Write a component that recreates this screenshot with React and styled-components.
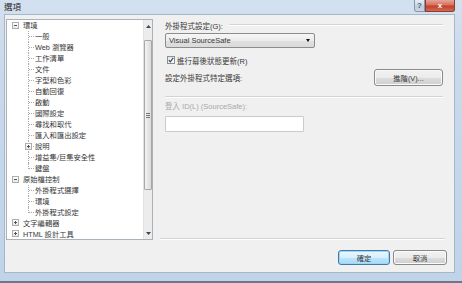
import React from 'react';
import styled, { createGlobalStyle } from 'styled-components';

const FONT = '"Liberation Sans", "Noto Sans CJK TC", sans-serif';

const Global = createGlobalStyle`
  html, body { margin: 0; padding: 0; background: #c3d5ea; }
  body { font-family: ${FONT}; }
  * { box-sizing: border-box; }
`;

const Window = styled.div`
  width: 462px;
  height: 283px;
  display: flex;
  flex-direction: column;
  background: linear-gradient(180deg, #d3e0ef 0%, #c8d9ec 30%, #c0d3e8 100%);
  border-bottom: 2px solid #6d7886;
  overflow: hidden;
`;

const TitleBar = styled.div`
  height: 14px;
  flex: none;
  display: flex;
  align-items: flex-start;
`;

const Title = styled.div`
  font-size: 8.5px;
  line-height: 14px;
  padding-left: 4px;
  color: #2a2a2a;
`;

const CaptionGroup = styled.div`
  margin-left: auto;
  margin-right: 7px;
  display: flex;
  height: 12px;
`;

const CaptionButton = styled.div`
  width: ${p => (p.$close ? 30 : 11)}px;
  height: 12px;
  display: flex;
  align-items: center;
  justify-content: center;
  font-size: 8px;
  font-weight: bold;
  color: ${p => (p.$close ? '#fff' : '#4d5f74')};
  border: 1px solid ${p => (p.$close ? '#8c3b30' : '#8797ab')};
  border-top: none;
  border-radius: ${p => (p.$close ? '0 0 3px 0' : '0 0 0 3px')};
  background: ${p =>
    p.$close
      ? 'linear-gradient(180deg, #e8a597 0%, #d4715f 45%, #c2402b 55%, #d26a52 100%)'
      : 'linear-gradient(180deg, #e6edf6 0%, #cfdbe9 45%, #bccbdd 55%, #cbd7e6 100%)'};
`;

const Client = styled.div`
  flex: 1;
  margin: 0 7px 8px 4px;
  background: #f0f0f0;
  border: 1px solid #a7b7ca;
  display: flex;
  flex-direction: column;
  padding: 4px 7px 0 1px;
`;

const MainRow = styled.div`
  display: flex;
  height: 221px;
`;

const Tree = styled.div`
  width: 147px;
  flex: none;
  border: 1px solid #a9b1bb;
  background: #fff;
  display: flex;
`;

const TreeList = styled.div`
  flex: 1;
  display: flex;
  flex-direction: column;
`;

const Row = styled.div`
  height: 11px;
  display: flex;
  align-items: center;
  padding-left: ${p => (p.$level === 0 ? 5 : 21)}px;
  font-size: 7.3px;
  color: #383838;
  white-space: nowrap;
`;

const Branch = styled.span`
  position: relative;
  width: 6px;
  height: 11px;
  flex: none;
  margin-right: 1px;
  &::before {
    content: '';
    position: absolute;
    left: 0;
    top: 0;
    height: ${p => (p.$last ? '6px' : '11px')};
    border-left: 1px dotted #aaaaaa;
  }
  &::after {
    content: '';
    position: absolute;
    left: 1px;
    top: 5px;
    width: 5px;
    border-top: 1px dotted #aaaaaa;
  }
`;

const Expander = styled.span`
  width: 7px;
  height: 7px;
  flex: none;
  border: 1px solid #aeaeae;
  background: linear-gradient(180deg, #ffffff, #e8e8e8);
  display: flex;
  align-items: center;
  justify-content: center;
  position: ${p => (p.$overlay ? 'absolute' : 'relative')};
  left: ${p => (p.$overlay ? '-3px' : 'auto')};
  top: ${p => (p.$overlay ? '2px' : 'auto')};
  z-index: 1;
  margin-right: ${p => (p.$overlay ? 0 : 4)}px;
  &::before {
    content: '';
    width: 3px;
    border-top: 1px solid #555;
  }
  &::after {
    content: '';
    position: absolute;
    left: 2px;
    top: 1px;
    height: 3px;
    border-left: 1px solid #555;
    display: ${p => (p.$plus ? 'block' : 'none')};
  }
`;

const Scrollbar = styled.div`
  width: 9px;
  flex: none;
  background: #ececec;
  border-left: 1px solid #e2e2e2;
  display: flex;
  flex-direction: column;
  align-items: center;
`;

const ScrollArrow = styled.div`
  height: 12px;
  width: 100%;
  display: flex;
  align-items: center;
  justify-content: center;
`;

const Thumb = styled.div`
  width: 8px;
  height: 150px;
  margin-top: 8px;
  border: 1px solid #a8a8a8;
  border-radius: 1px;
  background: linear-gradient(90deg, #f3f3f3, #dadada);
  display: flex;
  align-items: center;
  justify-content: center;
`;

const Grip = styled.div`
  width: 4px;
  height: 5px;
  background: repeating-linear-gradient(180deg, #777 0 1px, transparent 1px 2px);
`;

const Track = styled.div`
  flex: 1;
`;

const RightPanel = styled.div`
  flex: 1;
  margin-left: 7px;
  margin-right: 2px;
  display: flex;
  flex-direction: column;
`;

const PanelBody = styled.div`
  padding: 1px 2px 0 5px;
  display: flex;
  flex-direction: column;
  flex: 1;
`;

const Text = styled.span`
  font-size: 7.5px;
  color: ${p => (p.$disabled ? '#a8a8a8' : '#383838')};
  white-space: nowrap;
`;

const GroupHeader = styled.div`
  display: flex;
  align-items: center;
  height: 10px;
`;

const HeaderLine = styled.div`
  flex: 1;
  margin-left: 6px;
  height: 2px;
  border-top: 1px solid #d5d5d5;
  border-bottom: 1px solid #ffffff;
`;

const Combo = styled.div`
  margin-top: 3px;
  width: 150px;
  height: 15px;
  border: 1px solid #8c8c8c;
  border-radius: 2px;
  background: linear-gradient(180deg, #f6f6f6 0%, #ececec 50%, #e0e0e0 51%, #dadada 100%);
  display: flex;
  align-items: center;
  padding: 0 4px 0 3px;
`;

const ComboArrow = styled.span`
  margin-left: auto;
  width: 0;
  height: 0;
  border-left: 2.5px solid transparent;
  border-right: 2.5px solid transparent;
  border-top: 3px solid #111;
`;

const CheckRow = styled.div`
  margin-top: 7px;
  height: 10px;
  display: flex;
  align-items: center;
  padding-left: 2px;
`;

const CheckBox = styled.span`
  width: 8px;
  height: 8px;
  border: 1px solid #8e8f8f;
  background: linear-gradient(135deg, #dfe4ec, #ffffff);
  display: flex;
  align-items: center;
  justify-content: center;
  margin-right: 2px;
`;

const OptionRow = styled.div`
  margin-top: 4px;
  height: 17px;
  display: flex;
  align-items: center;
  justify-content: space-between;
`;

const Button = styled.div`
  width: ${p => p.$w}px;
  height: ${p => p.$h}px;
  margin-right: ${p => p.$mr || 0}px;
  border: 1px solid ${p => (p.$default ? '#3d7bad' : '#8a8a8a')};
  border-radius: 3px;
  background: ${p =>
    p.$default
      ? 'linear-gradient(180deg, #eaf6fd 0%, #d9f0fc 50%, #bee6fd 51%, #a7d9f5 100%)'
      : 'linear-gradient(180deg, #f2f2f2 0%, #ebebeb 50%, #dddddd 51%, #cfcfcf 100%)'};
  box-shadow: inset 0 0 0 1px ${p => (p.$default ? '#9fd6f2' : '#fafafa')};
  display: flex;
  align-items: center;
  justify-content: center;
  font-size: 7.3px;
  color: #383838;
`;

const Separator = styled.div`
  height: 2px;
  flex: none;
  margin-top: ${p => (p.$auto ? 'auto' : `${p.$mt || 0}px`)};
  border-top: 1px solid #d3d3d3;
  border-bottom: 1px solid #ffffff;
`;

const DisabledLabel = styled.div`
  margin-top: 3px;
  height: 9px;
  display: flex;
  align-items: center;
`;

const Input = styled.div`
  margin-top: 6px;
  width: 139px;
  height: 16px;
  background: #fff;
  border: 1px solid #c9cacc;
  border-radius: 1px;
`;

const Footer = styled.div`
  margin-top: 10px;
  display: flex;
  justify-content: flex-end;
  gap: 3px;
`;

const treeItems = [
  { t: '環境', level: 0, exp: 'minus' },
  { t: '一般', level: 1 },
  { t: 'Web 瀏覽器', level: 1 },
  { t: '工作清單', level: 1 },
  { t: '文件', level: 1 },
  { t: '字型和色彩', level: 1 },
  { t: '自動回復', level: 1 },
  { t: '啟動', level: 1 },
  { t: '國際設定', level: 1 },
  { t: '尋找和取代', level: 1 },
  { t: '匯入和匯出設定', level: 1 },
  { t: '說明', level: 1, exp: 'plus' },
  { t: '增益集/巨集安全性', level: 1 },
  { t: '鍵盤', level: 1, last: true },
  { t: '原始檔控制', level: 0, exp: 'minus' },
  { t: '外掛程式選擇', level: 1 },
  { t: '環境', level: 1 },
  { t: '外掛程式設定', level: 1, last: true },
  { t: '文字編輯器', level: 0, exp: 'plus' },
  { t: 'HTML 設計工具', level: 0, exp: 'plus' },
];

function TreeRow({ item }) {
  if (item.level === 0) {
    return (
      <Row $level={0}>
        <Expander $plus={item.exp === 'plus'} />
        {item.t}
      </Row>
    );
  }
  return (
    <Row $level={1}>
      <Branch $last={item.last}>
        {item.exp && <Expander $overlay $plus={item.exp === 'plus'} />}
      </Branch>
      {item.t}
    </Row>
  );
}

export default function App() {
  return (
    <>
      <Global />
      <Window>
        <TitleBar>
          <Title>選項</Title>
          <CaptionGroup>
            <CaptionButton>?</CaptionButton>
            <CaptionButton $close>x</CaptionButton>
          </CaptionGroup>
        </TitleBar>
        <Client>
          <MainRow>
            <Tree>
              <TreeList>
                {treeItems.map((it, i) => (
                  <TreeRow key={i} item={it} />
                ))}
              </TreeList>
              <Scrollbar>
                <ScrollArrow>
                  <svg width="5" height="3" viewBox="0 0 5 3">
                    <path d="M0 3 L2.5 0 L5 3 Z" fill="#444" />
                  </svg>
                </ScrollArrow>
                <Thumb>
                  <Grip />
                </Thumb>
                <Track />
                <ScrollArrow>
                  <svg width="5" height="3" viewBox="0 0 5 3">
                    <path d="M0 0 L2.5 3 L5 0 Z" fill="#444" />
                  </svg>
                </ScrollArrow>
              </Scrollbar>
            </Tree>
            <RightPanel>
              <PanelBody>
                <GroupHeader>
                  <Text>外掛程式設定(G):</Text>
                  <HeaderLine />
                </GroupHeader>
                <Combo>
                  <Text>Visual SourceSafe</Text>
                  <ComboArrow />
                </Combo>
                <CheckRow>
                  <CheckBox>
                    <svg width="6" height="6" viewBox="0 0 6 6">
                      <path d="M0.8 3.2 L2.3 4.8 L5.2 0.9" stroke="#2a3f6a" strokeWidth="1.1" fill="none" />
                    </svg>
                  </CheckBox>
                  <Text>進行幕後狀態更新(R)</Text>
                </CheckRow>
                <OptionRow>
                  <Text>設定外掛程式特定選項:</Text>
                  <Button $w={69} $h={17}>進階(V)...</Button>
                </OptionRow>
                <Separator $mt={10} />
                <DisabledLabel>
                  <Text $disabled>登入 ID(L) (SourceSafe):</Text>
                </DisabledLabel>
                <Input />
              </PanelBody>
              <Separator $auto />
            </RightPanel>
          </MainRow>
          <Footer>
            <Button $default $w={52} $h={15}>確定</Button>
            <Button $w={54} $h={15}>取消</Button>
          </Footer>
        </Client>
      </Window>
    </>
  );
}
